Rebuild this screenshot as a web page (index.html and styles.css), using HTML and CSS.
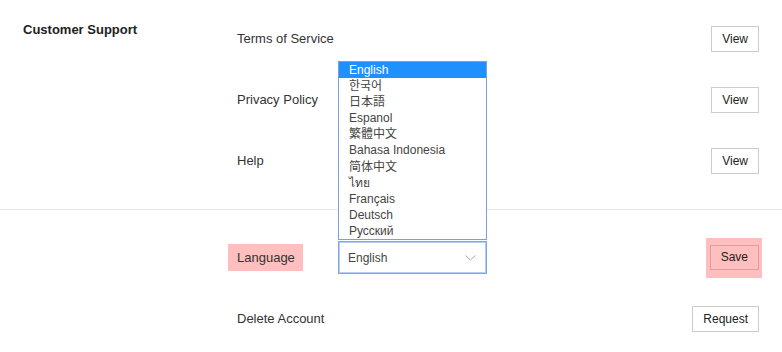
FILE: index.html
```html
<!DOCTYPE html>
<html lang="en">
<head>
	<meta charset="UTF-8">
	<title>Settings</title>
	<link rel="stylesheet" href="styles.css">
</head>
<body>
	<div class="section first">
		<div class="side"><h2>Customer Support</h2></div>
		<div class="rows">
			<div class="row">
				<span class="label">Terms of Service</span>
				<button class="btn">View</button>
			</div>
			<div class="row">
				<span class="label">Privacy Policy</span>
				<button class="btn">View</button>
			</div>
			<div class="row">
				<span class="label">Help</span>
				<button class="btn">View</button>
			</div>
		</div>
	</div>
	<div class="section second">
		<div class="side"></div>
		<div class="rows">
			<div class="row">
				<span class="label mark">Language</span>
				<div class="picker">
					<ul class="options">
						<li class="on">English</li>
						<li>한국어</li>
						<li>日本語</li>
						<li>Espanol</li>
						<li>繁體中文</li>
						<li>Bahasa Indonesia</li>
						<li>简体中文</li>
						<li>ไทย</li>
						<li>Français</li>
						<li>Deutsch</li>
						<li>Русский</li>
					</ul>
					<div class="select">
						<span>English</span>
						<svg width="11" height="6" viewBox="0 0 11 6"><path d="M0.5 0.5 L5.5 5 L10.5 0.5" fill="none" stroke="#aaa" stroke-width="1"/></svg>
					</div>
				</div>
				<span class="grow"></span>
				<span class="mark-btn"><button class="btn save">Save</button></span>
			</div>
			<div class="row">
				<span class="label">Delete Account</span>
				<button class="btn">Request</button>
			</div>
		</div>
	</div>
</body>
</html>
```

FILE: styles.css
```css
body {
	margin: 0;
	font-family: "Liberation Sans", Arial, "Noto Sans CJK KR", "Noto Sans CJK JP", sans-serif;
	color: #333;
	background: #fff;
}
.section {
	display: flex;
	padding: 8px 23px 18px 23px;
}
.second {
	padding-top: 17px;
	border-top: 1px solid #e8e8e8;
}
.side {
	width: 214px;
	flex: none;
}
.side h2 {
	margin: 14px 0 0 0;
	font-size: 13px;
	font-weight: bold;
	color: #222;
}
.rows {
	flex: 1;
}
.row {
	display: flex;
	align-items: center;
	height: 61px;
}
.label {
	font-size: 13px;
	flex: 1;
}
.second .row .label.mark {
	flex: none;
	width: 58px;
	margin-left: -9px;
	margin-right: 35px;
	padding: 6px 8px 6px 9px;
	background: #ffbfbf;
}
.grow {
	flex: 1;
}
.btn {
	font-family: "Liberation Sans", Arial, sans-serif;
	font-size: 12px;
	color: #222;
	background: #fff;
	border: 1px solid #ccc;
	height: 26px;
	padding: 0 10px;
	margin: 0;
}
.mark-btn {
	display: flex;
	background: #ffbfbf;
	padding: 7px 3px 8px 4px;
	margin-right: -3px;
}
.btn.save {
	background: transparent;
	border-color: #e39c9c;
	height: 25px;
}
.picker {
	position: relative;
}
.select {
	box-sizing: border-box;
	width: 149px;
	height: 33px;
	border: 1px solid #7ea6ea;
	box-shadow: inset 0 0 0 1px #b3cdf5;
	display: flex;
	align-items: center;
	justify-content: space-between;
	padding: 0 10px 0 9px;
	font-size: 12px;
	color: #444;
}
.select svg {
	margin-top: 1px;
}
.options {
	position: absolute;
	left: 0;
	bottom: 34px;
	width: 149px;
	box-sizing: border-box;
	margin: 0;
	padding: 0;
	list-style: none;
	border: 1px solid #7c9fdf;
	background: #fff;
	font-size: 12px;
	color: #444;
}
.options li {
	height: 16.1px;
	line-height: 16px;
	padding-left: 10px;
	white-space: nowrap;
}
.options li.on {
	background: #1e90ff;
	color: #fff;
}
```
